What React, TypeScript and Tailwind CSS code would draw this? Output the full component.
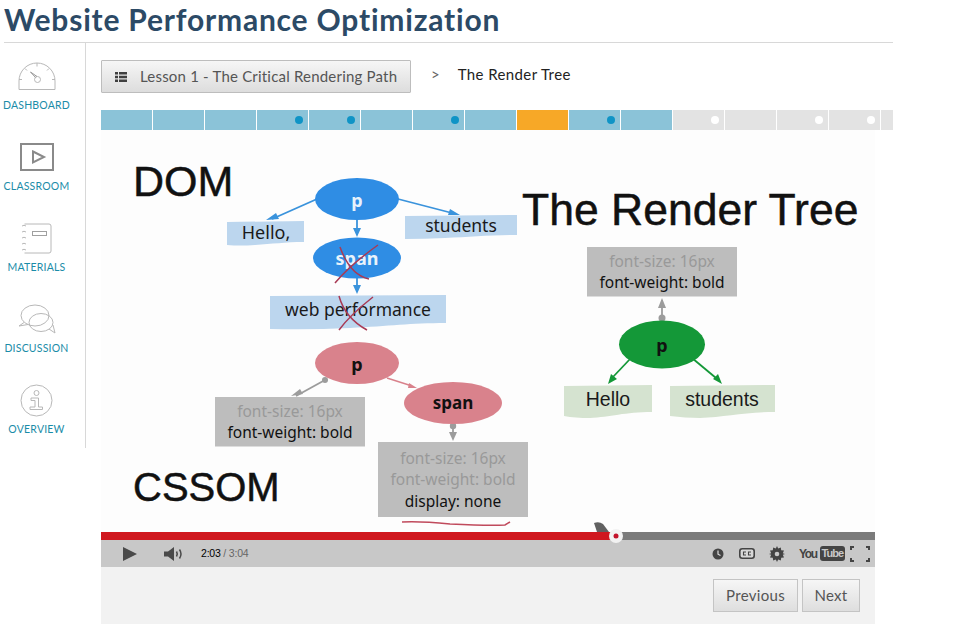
const navItems = [
  { label: "DASHBOARD", icon: "gauge" },
  { label: "CLASSROOM", icon: "play" },
  { label: "MATERIALS", icon: "book" },
  { label: "DISCUSSION", icon: "chat" },
  { label: "OVERVIEW", icon: "info" },
];

// c = colour state, dot = small marker at the right of the segment
const segments = [
  { c: "done" }, { c: "done" }, { c: "done" }, { c: "done", dot: true },
  { c: "done", dot: true }, { c: "done" }, { c: "done", dot: true }, { c: "done" },
  { c: "current" }, { c: "done", dot: true }, { c: "done" }, { c: "todo", dot: true },
  { c: "todo" }, { c: "todo", dot: true }, { c: "todo", dot: true }, { c: "todo", short: true },
];

const NavIcon = ({ name }: { name: string }) => {
  if (name === "gauge") {
    return (
      <svg width="38" height="29" viewBox="0 0 38 29" fill="none" stroke="#b8b8b8" strokeWidth="1">
        <path d="M1 27.500V19 A18 18 0 0 1 37 19 V27.500 Z" />
        <path d="M19 1V4.500M7 6.500l2 2M31 6.500l-2 2M1 17.500H4M37 17.500H34" />
        <circle cx="19.500" cy="17.500" r="3" />
        <path d="M17.500 15.500 L12.500 10 L19 14.500" stroke="#999" />
      </svg>
    );
  }
  if (name === "play") {
    return (
      <svg width="34" height="28" viewBox="0 0 34 28" fill="none" stroke="#8a8a8a" strokeWidth="2">
        <rect x="1" y="1" width="32" height="26" />
        <path d="M13 8.500 L24 14 L13 19.500 Z" />
      </svg>
    );
  }
  if (name === "book") {
    return (
      <svg width="32" height="31" viewBox="0 0 32 31" fill="none" stroke="#b8b8b8" strokeWidth="1">
        <path d="M3.500 1H28a2 2 0 0 1 2 2v25a2 2 0 0 1-2 2H3.500" />
        <rect x="11.500" y="8.500" width="14" height="4" stroke="#a0a0a0" />
        <path d="M1 3q2-1.500 4 0M1 9q2-1.500 4 0M1 15q2-1.500 4 0M1 21q2-1.500 4 0M1 27q2-1.500 4 0" />
      </svg>
    );
  }
  if (name === "chat") {
    return (
      <svg width="38" height="30" viewBox="0 0 38 30" fill="none" stroke="#b8b8b8" strokeWidth="1">
        <ellipse cx="17" cy="11.500" rx="14" ry="10.500" />
        <path d="M6 18.500 L1 22 L10 20.500" />
        <ellipse cx="23" cy="18.500" rx="12" ry="9" />
        <path d="M31 25 L37 29 L35 21" />
      </svg>
    );
  }
  return (
    <svg width="33" height="33" viewBox="0 0 33 33" fill="none" stroke="#b8b8b8" strokeWidth="1">
      <circle cx="16.500" cy="16.500" r="15.500" />
      <circle cx="16.500" cy="9" r="2.500" />
      <path d="M11 14H18.500V23H22.500V25.500H10V23H15V16.500H11Z" />
    </svg>
  );
};

const Slide = () => (
  <svg viewBox="101 130 774 402" width="774" height="402" className="block bg-[#fdfdfd]">
    <g fontFamily="'Liberation Sans', sans-serif" fill="#111" stroke="#111" strokeWidth="0.500">
      <text x="133" y="196" fontSize="43">DOM</text>
      <text x="522" y="225" fontSize="44.500">The Render Tree</text>
      <text x="133" y="501" fontSize="40">CSSOM</text>
    </g>

    {/* blue tree */}
    <g stroke="#3a93dc" strokeWidth="1.800" fill="#3a93dc">
      <path d="M317 199 L272 219" />
      <path d="M398 199 L452 213" />
      <path d="M357 220 V230" />
      <path d="M357 278 V290" />
      <path d="M266 220 l10-7 l3 6z M460 215 l-10-6 l-2 6z M353 228 h8 l-4 9z M353 285 h8 l-4 9z" stroke="none" />
    </g>
    <ellipse cx="357" cy="199" rx="42" ry="21" fill="#2f8de4" />
    <ellipse cx="357" cy="258" rx="44" ry="20.500" fill="#2f8de4" />
    <path d="M227 222 L304 221 V242 C285 242 272 244 255 245 Q240 246 227 245Z" fill="#bcd6ee" />
    <path d="M405 216 L517 215 V235 C490 235 470 237 445 238 Q425 239 405 239Z" fill="#bcd6ee" />
    <path d="M270 296 L446 295 V323 C410 323 390 326 350 328 Q310 330 270 329Z" fill="#bcd6ee" />
    <g fontFamily="'Noto Sans', sans-serif" fill="#1a1a1a" textAnchor="middle">
      <text x="266" y="239" fontSize="18">Hello,</text>
      <text x="461" y="232" fontSize="17.500">students</text>
      <text x="358" y="316" fontSize="17.500">web performance</text>
    </g>
    <g fontFamily="'Noto Sans', sans-serif" fontWeight="700" fill="#e8f2fb" textAnchor="middle">
      <text x="357" y="207" fontSize="18">p</text>
      <text x="357" y="265" fontSize="18">span</text>
    </g>
    <g stroke="#a93a55" strokeWidth="1.500" fill="none">
      <path d="M340 247 Q350 275 369 279" />
      <path d="M378 245 Q350 265 335 283" />
      <path d="M339 296 Q345 318 367 330" />
      <path d="M373 297 Q350 315 339 330" />
    </g>

    {/* pink tree */}
    <g stroke="#9c9c9c" strokeWidth="1.800" fill="#9c9c9c">
      <path d="M325 380 L296 396" />
      <circle cx="325" cy="380" r="3" stroke="none" />
      <path d="M291 396 l9-7 l3 5z" stroke="none" />
      <path d="M453 425 V438" />
      <circle cx="453" cy="426" r="3.200" stroke="none" />
      <path d="M449 432 h8 l-4 9z" stroke="none" />
      <path d="M662 300 V318" />
      <circle cx="662" cy="318" r="3.500" stroke="none" />
      <path d="M658 308 h8 l-4 -10z" stroke="none" />
    </g>
    <path d="M387 378 L412 386" stroke="#d9828c" strokeWidth="1.500" />
    <path d="M417 388 l-8-5 l-1 5z" fill="#d9828c" />
    <ellipse cx="357" cy="363" rx="42" ry="21" fill="#d9828c" />
    <ellipse cx="453" cy="403" rx="49" ry="21" fill="#d9828c" />
    <g fontFamily="'Noto Sans', sans-serif" fontWeight="700" fill="#111" textAnchor="middle">
      <text x="357" y="371" fontSize="18">p</text>
      <text x="453" y="409" fontSize="17">span</text>
    </g>
    <rect x="215" y="397" width="150" height="49.500" fill="#bdbdbd" />
    <rect x="378" y="442" width="150" height="75" fill="#bdbdbd" />
    <rect x="587" y="247" width="150" height="49.500" fill="#bdbdbd" />
    <g fontFamily="'Noto Sans', sans-serif" fontSize="15.500" textAnchor="middle">
      <text x="290" y="417" fill="#999999">font-size: 16px</text>
      <text x="290" y="438" fill="#111">font-weight: bold</text>
      <text x="453" y="464" fill="#999999">font-size: 16px</text>
      <text x="453" y="485" fill="#999999">font-weight: bold</text>
      <text x="453" y="507" fill="#111">display: none</text>
      <text x="662" y="267" fill="#999999">font-size: 16px</text>
      <text x="662" y="288" fill="#111">font-weight: bold</text>
    </g>
    <path d="M402 522 Q420 521 450 524 Q490 526 505 525 L510 522" stroke="#c04a5c" strokeWidth="1.500" fill="none" />

    {/* green tree */}
    <g stroke="#149838" strokeWidth="1.800" fill="#149838">
      <path d="M631 358 L612 378" />
      <path d="M692 358 L716 378" />
      <path d="M608 384 l3-10 l6 5z M722 384 l-9-5 l5-5z" stroke="none" />
    </g>
    <ellipse cx="662" cy="344.500" rx="43" ry="24" fill="#149838" />
    <text x="662" y="352" fontFamily="'Noto Sans', sans-serif" fontWeight="700" fontSize="18" fill="#111" textAnchor="middle">p</text>
    <path d="M564 386 L652 385 V412 C625 412 610 417 590 418 Q575 418 564 416Z" fill="#d5e3d0" />
    <path d="M670 386 L775 385 V412 C745 412 725 417 700 418 Q685 418 670 416Z" fill="#d5e3d0" />
    <g fontFamily="'Liberation Sans', sans-serif" fontSize="19.500" fill="#1a1a1a" textAnchor="middle">
      <text x="608" y="406">Hello</text>
      <text x="722" y="406">students</text>
    </g>
  </svg>
);

const VideoControls = () => (
  <div className="flex h-[27px] items-center bg-[#c8c8c8] font-['Liberation_Sans',sans-serif]">
    <svg width="14" height="14" viewBox="0 0 14 14" className="ml-[22px]">
      <path d="M0 0 L14 7 L0 14Z" fill="#4a4a4a" />
    </svg>
    <svg width="20" height="14" viewBox="0 0 20 14" className="ml-[27px]" fill="none">
      <path d="M0 4.500H4L10 0V14L4 9.500H0Z" fill="#4a4a4a" />
      <path d="M12.500 4.500q1.500 2.500 0 5M15.500 2.500q3 4.500 0 9" stroke="#4a4a4a" strokeWidth="1.500" />
    </svg>
    <div className="ml-[17px] text-[10.500px] tracking-[-0.2px] text-black">
      2:03 <span className="text-[#666]">/ 3:04</span>
    </div>
    <div className="ml-auto flex items-center">
      <svg width="12" height="12" viewBox="0 0 12 12">
        <circle cx="6" cy="6" r="5.500" fill="#444" />
        <path d="M6 2.500V6.200L8.500 7.500" stroke="#ddd" strokeWidth="1.200" fill="none" />
      </svg>
      <svg width="16" height="11" viewBox="0 0 16 11" className="ml-[15px]">
        <rect x="0.800" y="0.800" width="14.400" height="9.400" rx="2.500" fill="#d8d8d8" stroke="#444" strokeWidth="1.600" />
        <path d="M7 4H4.500V7H7M12 4H9.500V7H12" stroke="#444" strokeWidth="1.100" fill="none" />
      </svg>
      <svg width="16" height="16" viewBox="0 0 16 16" className="ml-[14px]">
        <path d="M8 0l1.200 2.600 2.600-1.200.4 2.800 2.800.4-1.200 2.600L16 8l-2.200.8 1.200 2.600-2.800.4-.4 2.800-2.600-1.200L8 16l-1.200-2.600-2.600 1.200-.4-2.800-2.800-.4 1.200-2.600L0 8l2.200-.8L1 4.600l2.800-.4.4-2.800 2.600 1.200Z" fill="#444" />
        <circle cx="8" cy="8" r="2.300" fill="#c8c8c8" />
      </svg>
      <div className="ml-[14px] flex h-[14px] w-[39px] items-center text-[#444]">
        <span className="text-[12px] font-bold tracking-[-1.400px]">You</span>
        <span className="ml-[3px] rounded-[3px] bg-[#444] px-[2px] text-[11px] leading-[15px] font-bold tracking-[-1px] text-[#c8c8c8]">Tube</span>
      </div>
      <svg width="20" height="16" viewBox="0 0 20 16" className="mr-[5px] ml-[12px]" fill="none" stroke="#444" strokeWidth="2">
        <path d="M1 4V1H4M16 1H19V4M1 12V15H4M16 15H19V12" />
      </svg>
    </div>
  </div>
);

export default function App() {
  return (
    <div className="h-[642px] w-[960px] overflow-hidden bg-white font-['Lato',sans-serif]">
      <div className="w-[893px]">
        <h1 className="ml-1 h-[43px] border-b border-[#d8d8d8] text-[30px] leading-[39px] font-bold tracking-[0.8px] text-[#2c4a66]">
          Website Performance Optimization
        </h1>
        <div className="flex">
          <aside className="flex h-[405px] w-[86px] flex-col border-r border-[#d8d8d8] pt-4">
            {navItems.map((item) => (
              <div key={item.label} className="flex h-[81px] shrink-0 flex-col items-center pr-[12px]">
                <div className="flex h-[34px] items-center justify-center">
                  <NavIcon name={item.icon} />
                </div>
                <span className="mt-[6px] text-[10.500px] leading-[13px] tracking-[0.2px] text-[#1a8ca8]">{item.label}</span>
              </div>
            ))}
          </aside>
          <main className="w-[807px] pl-[15px]">
            <div className="flex h-[67px] items-start pt-[17px]">
              <button className="flex h-[33px] w-[310px] items-center rounded-[1px] border border-[#bdbdbd] bg-gradient-to-b from-[#f6f6f6] to-[#dddddd] pl-[13px] text-[15px] tracking-[0.2px] text-[#555]">
                <svg width="12" height="10" viewBox="0 0 12 10" fill="#3f3f3f">
                  <path d="M0 0h3v2.500H0zM4 0h8v2.500H4zM0 3.700h3v2.500H0zM4 3.700h8v2.500H4zM0 7.400h3V10H0zM4 7.400h8V10H4z" />
                </svg>
                <span className="ml-[13px]">Lesson 1 - The Critical Rendering Path</span>
              </button>
              <span className="ml-5 text-[15px] leading-[28px] text-[#666]">&gt;</span>
              <span className="ml-[18px] text-[15px] leading-[28px] tracking-[0.4px] text-[#222]">The Render Tree</span>
            </div>
            <div className="flex h-5 gap-px">
              {segments.map((s, i) => (
                <div
                  key={i}
                  className={`flex items-center justify-end pr-[5px] ${s.short ? "w-[12px]" : "w-[51px]"} ${
                    s.c === "done" ? "bg-[#8bc3d8]" : s.c === "current" ? "bg-[#f7a827]" : "bg-[#e3e3e3]"
                  }`}
                >
                  {s.dot && <span className={`h-2 w-2 rounded-full ${s.c === "todo" ? "bg-white" : "bg-[#0f94c6]"}`} />}
                </div>
              ))}
            </div>
            <div className="w-[774px]">
              <Slide />
              <div className="relative flex h-2">
                <div className="w-[515px] bg-[#d0181f]" />
                <div className="flex-1 bg-[#7b7b7b]" />
                <svg width="34" height="26" viewBox="0 0 34 26" className="absolute top-[-14px] left-[490px]">
                  <path d="M3 5 Q8 3 12 6 L18 14 H6Z" fill="#3a3a3a" opacity="0.8" />
                  <circle cx="25" cy="18" r="7" fill="#f2f2f2" />
                  <circle cx="25" cy="18" r="2.500" fill="#c3132a" />
                </svg>
              </div>
              <VideoControls />
              <div className="flex h-[57px] items-start justify-end gap-1 bg-[#f2f2f2] pt-3 pr-[15px]">
                <button className="h-[33px] w-[85px] border border-[#c4c4c4] bg-gradient-to-b from-[#f6f6f6] to-[#dedede] text-[15px] tracking-[0.3px] text-[#555]">Previous</button>
                <button className="h-[33px] w-[58px] border border-[#c4c4c4] bg-gradient-to-b from-[#f6f6f6] to-[#dedede] text-[15px] tracking-[0.3px] text-[#555]">Next</button>
              </div>
            </div>
          </main>
        </div>
      </div>
    </div>
  );
}
